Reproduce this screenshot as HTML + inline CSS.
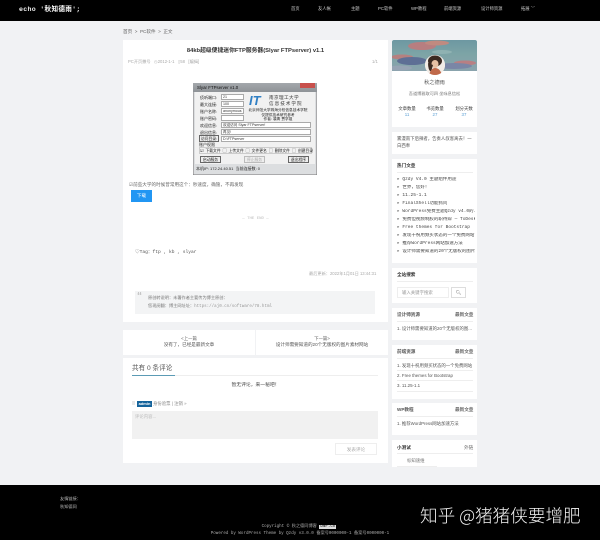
<!DOCTYPE html>
<html lang="zh">
<head>
<meta charset="utf-8">
<style>
html,body{margin:0;padding:0;background:#f1f2f4}
body{width:600px;height:540px;overflow:hidden;position:relative;font-family:"Liberation Sans","Noto Sans CJK SC",sans-serif;color:#444;font-size:4.5px;line-height:1.2}
#p{left:0;top:0;width:600px;height:540px;overflow:hidden;filter:blur(.25px)}
div,span,svg{position:absolute;white-space:nowrap}
span.i{position:static}
.card{background:#fff}
.nav{top:6px;font-size:4.3px;color:#ccc;line-height:6px}
.g{color:#999}
.hot{left:397px;font-size:4.5px;color:#444;font-family:"Liberation Mono","Noto Sans CJK SC",monospace;line-height:6px;width:78px;overflow:hidden}
.t{font-weight:bold;color:#333;font-size:4.6px;line-height:6px}
.ln{height:1px;background:#eee}
.w{font-size:4.4px;color:#555;line-height:6px;width:76px;overflow:hidden}
.win{font-size:4px;color:#222;line-height:5px}
.in{background:#fff;border:.5px solid #aaa;box-sizing:border-box;height:6px;font-size:3.6px;line-height:5px;color:#333;padding-left:1px}
.btn{background:#eee;border:.5px solid #666;box-sizing:border-box;height:7px;font-size:3.8px;line-height:6px;text-align:center;color:#222}
</style>
</head>
<body>
<div id="p">
<div style="left:0;top:0;width:600px;height:21px;background:#000"></div>
<div style="left:19px;top:5px;font-size:6.6px;line-height:10px;color:#eee;font-weight:bold;letter-spacing:.3px;font-family:'Liberation Mono','Noto Sans CJK SC',monospace">echo <span class="i" style="color:#fff">'秋知德雨';</span></div>
<div class="nav" style="left:291px">首页</div>
<div class="nav" style="left:318px">友人帐</div>
<div class="nav" style="left:351px">主题</div>
<div class="nav" style="left:378px">PC软件</div>
<div class="nav" style="left:411px">WP教程</div>
<div class="nav" style="left:444px">前端资源</div>
<div class="nav" style="left:481px">设计师资源</div>
<div class="nav" style="left:521px">拓展 ﹀</div>

<div style="left:123px;top:29px;font-size:4.6px;color:#666;line-height:6px">首页 &nbsp;&gt;&nbsp; PC软件 &nbsp;&gt;&nbsp; 正文</div>

<!-- main card -->
<div class="card" style="left:123px;top:40px;width:265px;height:282px"></div>
<div style="left:123px;top:47px;width:265px;text-align:center;font-size:5.8px;line-height:8px;font-weight:bold;color:#333">84kb超级便捷迷你FTP服务器(Slyar FTPserver) v1.1</div>
<div class="g" style="left:128px;top:59px;font-size:4.2px;line-height:6px;color:#aaa">PC开页撒号 &nbsp; ◷2012-1-1 &nbsp; ▯58 &nbsp; [编缉]</div>
<div style="left:372px;top:59px;font-size:4.2px;line-height:6px;color:#aaa">1/1</div>

<!-- window screenshot -->
<div style="left:193px;top:83px;width:124px;height:92px;background:#dcdee0;box-shadow:inset 0 0 0 .5px #777"></div>
<div style="left:193px;top:83px;width:124px;height:9px;background:linear-gradient(#a4a8ac,#8f9397)"></div>
<div class="win" style="left:197px;top:85px;font-size:4.4px;color:#111">Slyar FTPserver v1.0</div>
<div style="left:300px;top:83px;width:15px;height:5px;background:#c8504c"></div>
<div style="left:195px;top:92px;width:120px;height:72px;background:#f1f1f1"></div>
<div class="win" style="left:200px;top:95px">侦听端口:</div><div class="in" style="left:221px;top:94px;width:23px">21</div>
<div class="win" style="left:200px;top:102px">最大连接:</div><div class="in" style="left:221px;top:101px;width:23px">100</div>
<div class="win" style="left:200px;top:109px">账户名称:</div><div class="in" style="left:221px;top:108px;width:23px">anonymous</div>
<div class="win" style="left:200px;top:116px">账户密码:</div><div class="in" style="left:221px;top:115px;width:23px"></div>
<div style="left:249px;top:94px;font-size:13px;line-height:13px;font-weight:bold;font-style:italic;color:#2f7fc4">IT</div>
<div class="win" style="left:269px;top:95px;font-size:4.6px;color:#333;letter-spacing:.4px">南京理工大学</div>
<div class="win" style="left:269px;top:101px;font-size:4.6px;color:#333;letter-spacing:1px">信息技术学院</div>
<div class="win" style="left:248px;top:108px;font-size:3.7px;width:60px;text-align:center">北京师范大学珠海分校信息技术学院</div>
<div class="win" style="left:248px;top:113px;font-size:3.7px;width:60px;text-align:center">仅提供技术研究参考</div>
<div class="win" style="left:248px;top:117px;font-size:3.7px;width:60px;text-align:center">作者: 裴青 贾学祖</div>
<div class="win" style="left:200px;top:123px">欢迎信息:</div><div class="in" style="left:221px;top:122px;width:90px">欢迎访问 Slyar FTPserver!</div>
<div class="win" style="left:200px;top:130px">退出信息:</div><div class="in" style="left:221px;top:129px;width:90px">再见!</div>
<div class="btn" style="left:199px;top:135px;width:20px;height:7px">访问目录:</div><div class="in" style="left:221px;top:136px;width:90px">D:\FTPserver</div>
<div class="win" style="left:199px;top:142px">账户权限</div>
<div class="win" style="left:199px;top:147px;width:113px;height:7px;border:.5px solid #ccc;box-sizing:border-box;font-size:3.8px;line-height:6px;word-spacing:1px">☑ 下载文件 ▢ 上传文件 ▢ 文件更名 ▢ 删除文件 ▢ 创建目录</div>
<div class="btn" style="left:200px;top:156px;width:21px">启动服务</div>
<div class="btn" style="left:244px;top:156px;width:21px;color:#aaa;border-color:#bbb">停止服务</div>
<div class="btn" style="left:288px;top:156px;width:21px">退出程序</div>
<div class="win" style="left:196px;top:166px">本机IP: 172.24.40.51 &nbsp;当前连接数: 0</div>

<div style="left:129px;top:182px;font-size:4.6px;line-height:6px;color:#666">☑前些大学的时候曾常用这个：秒速度，确施，不再发现</div>
<div style="left:131px;top:190px;width:21px;height:12px;background:#2196f3;color:#fff;font-size:4.6px;line-height:12px;text-align:center">下载</div>

<div style="left:123px;top:216px;width:265px;text-align:center;font-size:4px;line-height:6px;color:#bbb;font-family:'Liberation Mono',monospace">— THE END —</div>
<div style="left:135px;top:250px;font-size:4.6px;line-height:6px;color:#555;font-family:'Liberation Mono','Noto Sans CJK SC',monospace">♡Tag：ftp , kb , slyar</div>
<div style="left:309px;top:271px;font-size:4.2px;line-height:6px;color:#aaa">最后更新：2022年1月01日 13:44:31</div>

<div style="left:135px;top:291px;width:240px;height:23px;background:#f3f4f5"></div>
<div style="left:137px;top:291px;font-size:10px;line-height:12px;color:#bbb;font-weight:bold">“</div>
<div style="left:148px;top:295px;font-size:4.2px;line-height:6px;color:#777">原创转说明：未署作者主要传为博主原创：</div>
<div style="left:148px;top:303px;font-size:4.2px;line-height:6px;color:#777">您现阅翻：博主网址址：<span class="i" style="font-family:'Liberation Mono',monospace;color:#999">https://aj0.cn/software/78.html</span></div>

<!-- prev/next -->
<div class="card" style="left:123px;top:330px;width:265px;height:25px"></div>
<div style="left:255px;top:330px;width:1px;height:25px;background:#f1f2f4"></div>
<div style="left:123px;top:336px;width:132px;text-align:center;font-size:4.4px;line-height:6px;color:#666">&lt;上一篇</div>
<div style="left:123px;top:342px;width:132px;text-align:center;font-size:4.6px;line-height:6px;color:#555">没有了，已经是最新文章</div>
<div style="left:256px;top:336px;width:132px;text-align:center;font-size:4.4px;line-height:6px;color:#666">下一篇&gt;</div>
<div style="left:256px;top:342px;width:132px;text-align:center;font-size:4.6px;line-height:6px;color:#555">设计师需要知道的20个无版权的图片素材网站</div>

<!-- comments -->
<div class="card" style="left:123px;top:358px;width:265px;height:105px"></div>
<div style="left:132px;top:364px;font-size:6.6px;line-height:9px;color:#555">共有 0 条评论</div>
<div class="ln" style="left:132px;top:375px;width:246px"></div>
<div style="left:132px;top:375px;width:43px;height:1px;background:#5b9bb5"></div>
<div style="left:123px;top:382px;width:265px;text-align:center;font-size:4.8px;line-height:7px;color:#444">暂无评论，来一秘吧！</div>
<div style="left:132px;top:401px;width:3px;height:4px;background:#e8e8e8"></div>
<div style="left:137px;top:401px;width:15px;height:6px;background:#14639b;color:#fff;font-size:4px;line-height:6px;text-align:center;font-weight:bold">admin</div>
<div style="left:153px;top:401px;font-size:4.4px;line-height:6px;color:#888">身份验票 | 注销 »</div>
<div style="left:132px;top:411px;width:246px;height:28px;background:#f1f1f1"></div>
<div style="left:135px;top:414px;font-size:4.4px;line-height:6px;color:#bbb">评论内容...</div>
<div style="left:335px;top:443px;width:42px;height:12px;border:.5px solid #eee;box-sizing:border-box;font-size:4.6px;line-height:11px;text-align:center;color:#aaa">发表评论</div>

<!-- sidebar profile -->
<div class="card" style="left:392px;top:40px;width:85px;height:87px"></div>
<div style="left:392px;top:40px;width:85px;height:31px;overflow:hidden;background:linear-gradient(#6d98a2,#7da4a6 45%,#8aa3ad);border-radius:2px 2px 0 0">
<svg width="85" height="31" viewBox="0 0 85 31" style="left:0;top:0">
<ellipse cx="30" cy="6" rx="14" ry="4" fill="#b77e80"/>
<ellipse cx="45" cy="3" rx="12" ry="2.5" fill="#c08a80"/>
<ellipse cx="10" cy="17" rx="11" ry="2.5" fill="#b6807f"/>
<ellipse cx="20" cy="21" rx="15" ry="4" fill="#5e6f95"/>
<ellipse cx="73" cy="23" rx="11" ry="2.5" fill="#b87f83"/>
<ellipse cx="62" cy="26" rx="18" ry="3" fill="#7a86a6"/>
<ellipse cx="50" cy="12" rx="10" ry="2" fill="#8fb2b2"/>
<ellipse cx="8" cy="28" rx="12" ry="2.5" fill="#97a4b4"/>
</svg>
</div>
<div style="left:425px;top:55px;width:20px;height:20px;border-radius:50%;background:#eee;overflow:hidden">
<svg width="20" height="20" viewBox="0 0 20 20" style="left:0;top:0">
<rect width="20" height="20" fill="#f2ece6"/>
<ellipse cx="10" cy="6" rx="7" ry="5.5" fill="#3b2a22"/>
<ellipse cx="10" cy="9" rx="3.5" ry="4" fill="#e6c0a4"/>
<path d="M3 8 Q3 15 6 17 L8 10Z" fill="#3b2a22"/>
<path d="M4 20 Q6 13 10 13 Q15 13 17 20Z" fill="#c0694a"/>
</svg>
</div>
<div style="left:392px;top:80px;width:85px;text-align:center;font-size:5.2px;line-height:7px;color:#555">秋之德雨</div>
<div style="left:392px;top:91px;width:85px;text-align:center;font-size:4.2px;line-height:6px;color:#777">吾道博雅取可四 坐咏息信松</div>
<div style="left:392px;top:106px;width:30px;text-align:center;font-size:4.4px;line-height:6px;color:#444">文章数量</div>
<div style="left:420px;top:106px;width:30px;text-align:center;font-size:4.4px;line-height:6px;color:#444">书览数量</div>
<div style="left:449px;top:106px;width:30px;text-align:center;font-size:4.4px;line-height:6px;color:#444">划分天数</div>
<div style="left:392px;top:112px;width:30px;text-align:center;font-size:4.4px;line-height:6px;color:#5a9fd4">11</div>
<div style="left:420px;top:112px;width:30px;text-align:center;font-size:4.4px;line-height:6px;color:#5a9fd4">27</div>
<div style="left:449px;top:112px;width:30px;text-align:center;font-size:4.4px;line-height:6px;color:#5a9fd4">37</div>

<div class="card" style="left:392px;top:132px;width:85px;height:22px"></div>
<div style="left:397px;top:135px;width:76px;font-size:4.4px;line-height:7px;color:#555;white-space:normal">雾漫南下后辣者，告奏人叔客离去！一白西奉</div>

<!-- hot -->
<div class="card" style="left:392px;top:159px;width:85px;height:104px"></div>
<div class="t" style="left:397px;top:163px">热门文章</div>
<div class="ln" style="left:397px;top:172px;width:76px"></div>
<div class="hot" style="top:177px">▸ Qzdy V4.0 主题组件用途</div>
<div class="hot" style="top:185px">▸ 世界，您好！</div>
<div class="hot" style="top:193px">▸ 11.25-1.1</div>
<div class="hot" style="top:201px">▸ FinalShell功能抓问</div>
<div class="hot" style="top:209px">▸ WordPress免费主题Qzdy v4.0的...</div>
<div class="hot" style="top:217px">▸ 免费但视频制胶的职待辩 — ToDesk</div>
<div class="hot" style="top:225px">▸ Free themes for Bootstrap</div>
<div class="hot" style="top:233px">▸ 发现十祝用频买状态的一个免费网站</div>
<div class="hot" style="top:241px">▸ 推荐WordPress网站加速方法</div>
<div class="hot" style="top:249px">▸ 设计师需要知道的20个无版权的图片...</div>

<!-- search -->
<div class="card" style="left:392px;top:268px;width:85px;height:35px"></div>
<div class="t" style="left:397px;top:272px">全站搜索</div>
<div class="ln" style="left:397px;top:281px;width:76px"></div>
<div style="left:397px;top:287px;width:52px;height:11px;border:.5px solid #eee;box-sizing:border-box;font-size:4.4px;line-height:10px;color:#999;padding-left:4px">输入关键字搜索</div>
<div style="left:451px;top:287px;width:15px;height:11px;border:.5px solid #ddd;box-sizing:border-box;font-size:4.6px;line-height:10px;text-align:center;color:#888">🔍︎</div>

<!-- design -->
<div class="card" style="left:392px;top:308px;width:85px;height:32px"></div>
<div class="t" style="left:397px;top:312px;color:#555">设计师资源</div>
<div class="t" style="left:455px;top:312px;color:#666">最新文章</div>
<div class="ln" style="left:397px;top:321px;width:76px"></div>
<div class="w" style="left:397px;top:326px">1. 设计师需要知道的20个无版权的图...</div>

<!-- front-end -->
<div class="card" style="left:392px;top:345px;width:85px;height:54px"></div>
<div class="t" style="left:397px;top:349px;color:#555">前端资源</div>
<div class="t" style="left:455px;top:349px;color:#666">最新文章</div>
<div class="ln" style="left:397px;top:358px;width:76px"></div>
<div class="w" style="left:397px;top:363px">1. 发现十祝用频买状态的一个免费网站</div>
<div class="ln" style="left:397px;top:370px;width:76px"></div>
<div class="w" style="left:397px;top:373px">2. Free themes for Bootstrap</div>
<div class="ln" style="left:397px;top:380px;width:76px"></div>
<div class="w" style="left:397px;top:383px">3. 11.25-1.1</div>
<div class="ln" style="left:397px;top:391px;width:76px"></div>

<!-- wp -->
<div class="card" style="left:392px;top:403px;width:85px;height:32px"></div>
<div class="t" style="left:397px;top:407px;color:#555">WP教程</div>
<div class="t" style="left:455px;top:407px;color:#666">最新文章</div>
<div class="ln" style="left:397px;top:416px;width:76px"></div>
<div class="w" style="left:397px;top:421px">1. 推荐WordPress网站加速方法</div>

<!-- test -->
<div class="card" style="left:392px;top:440px;width:85px;height:27px"></div>
<div class="t" style="left:397px;top:445px">小测试</div>
<div class="t" style="left:464px;top:445px;color:#666;font-weight:normal">外链</div>
<div class="ln" style="left:397px;top:453px;width:76px"></div>
<div class="w" style="left:407px;top:458px;color:#777">标知速维</div>
<div class="ln" style="left:397px;top:466px;width:40px"></div>

<!-- footer -->
<div style="left:0;top:485px;width:600px;height:55px;background:#000"></div>
<div style="left:60px;top:496px;font-size:4.2px;line-height:6px;color:#bbb">友情链接：</div>
<div style="left:60px;top:504px;font-size:4.2px;line-height:6px;color:#bbb">秋知德同</div>
<div style="left:204px;top:524px;width:190px;text-align:center;font-size:4.2px;line-height:6px;color:#aaa;font-family:'Liberation Mono','Noto Sans CJK SC',monospace">Copyright © 秋之德同博客 <span class="i" style="background:#ddd;color:#000;padding:0 1px">DNF.cn</span></div>
<div style="left:195px;top:531px;width:210px;text-align:center;font-size:4.2px;line-height:6px;color:#aaa;font-family:'Liberation Mono','Noto Sans CJK SC',monospace">Powered by WordPress Theme by Qzdy v3.0.0 备案号0000000-1 备案号0000000-1</div>
<div style="left:420px;top:505px;font-size:17.6px;line-height:22px;color:#f2f2f2;font-family:'Noto Sans CJK SC',sans-serif;font-weight:300">知乎 @猪猪侠要增肥</div>
</div>
</body>
</html>
